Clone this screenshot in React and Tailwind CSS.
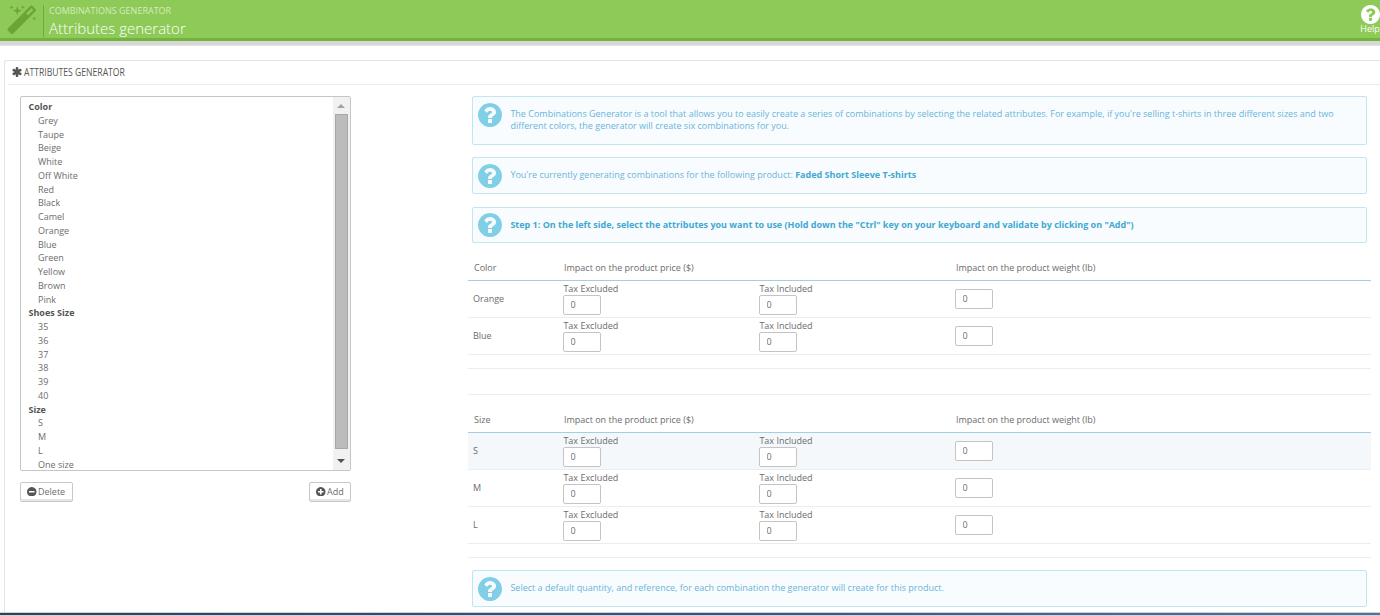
const CIRCLE =
  'M1664 896q0 209-103 385.5t-279.5 279.5-385.5 103-385.5-103-279.5-279.5-103-385.5 103-385.5 279.5-279.5 385.5-103 385.5 103 279.5 279.5 103 385.5z';

const ICONS = {
  question:
    'M1024 1376v-192q0-14-9-23t-23-9h-192q-14 0-23 9t-9 23v192q0 14 9 23t23 9h192q14 0 23-9t9-23zM1280 704q0-88-55.5-163t-138.5-116-170-41q-243 0-371 213-15 24 8 42l132 100q7 6 19 6 16 0 25-12 53-68 86-92 34-24 86-24 48 0 85.5 26t37.5 59q0 38-20 61t-68 45q-63 28-115.5 86.5t-52.5 125.5v36q0 14 9 23t23 9h192q14 0 23-9t9-23q0-19 21.5-49.5t54.5-49.5q32-18 49-28.5t46-35 44.5-48 28-60.5 12.5-81z' +
    CIRCLE,
  plus:
    'M1344 960v-128q0-26-19-45t-45-19h-256v-256q0-26-19-45t-45-19h-128q-26 0-45 19t-19 45v256h-256q-26 0-45 19t-19 45v128q0 26 19 45t45 19h256v256q0 26 19 45t45 19h128q26 0 45-19t19-45v-256h256q26 0 45-19t19-45z' +
    CIRCLE,
  minus:
    'M1344 960v-128q0-26-19-45t-45-19h-768q-26 0-45 19t-19 45v128q0 26 19 45t45 19h768q26 0 45-19t19-45z' +
    CIRCLE,
  asterisk:
    'M1546 1050q46 26 59.5 77.5t-12.5 97.5l-64 110q-26 46-77.5 59.5t-97.5-12.5l-266-153v307q0 52-38 90t-90 38h-128q-52 0-90-38t-38-90v-307l-266 153q-46 26-97.5 12.5t-77.5-59.5l-64-110q-26-46-12.5-97.5t59.5-77.5l266-154-266-154q-46-26-59.5-77.5t12.5-97.5l64-110q26-46 77.5-59.5t97.5 12.5l266 153v-307q0-52 38-90t90-38h128q52 0 90 38t38 90v307l266-153q46-26 97.5-12.5t77.5 59.5l64 110q26 46 12.5 97.5t-59.5 77.5l-266 154z',
  magic:
    'M1254 581l293-293-107-107-293 293zM1702 288q0 27-18 45l-1286 1286q-18 18-45 18t-45-18l-198-198q-18-18-18-45t18-45l1286-1286q18-18 45-18t45 18l198 198q18 18 18 45zM354 98l98 30-98 30-30 98-30-98-98-30 98-30 30-98zM704 260l196 60-196 60-60 196-60-196-196-60 196-60 60-196zM1634 738l98 30-98 30-30 98-30-98-98-30 98-30 30-98zM994 98l98 30-98 30-30 98-30-98-98-30 98-30 30-98z',
};

function Icon({ name, box = '128 128 1536 1536', className }) {
  return (
    <svg viewBox={box} fill="currentColor" className={`block shrink-0 ${className}`}>
      <path d={ICONS[name]} />
    </svg>
  );
}

const GROUPS = [
  {
    label: 'Color',
    options: ['Grey', 'Taupe', 'Beige', 'White', 'Off White', 'Red', 'Black', 'Camel', 'Orange', 'Blue', 'Green', 'Yellow', 'Brown', 'Pink'],
  },
  { label: 'Shoes Size', options: ['35', '36', '37', '38', '39', '40'] },
  { label: 'Size', options: ['S', 'M', 'L', 'One size'] },
];

function Header() {
  return (
    <header className="flex h-[41px] shrink-0 border-b-[3px] border-[#72b43b] bg-[#8dca57] pl-[7px]">
      <Icon name="magic" box="90 0 1642 1637" className="mt-[5px] h-[29px] w-[30px] text-[#6ba437]" />
      <div className="mt-[5px] ml-[6px] h-[32px] w-px bg-[#72a945]" />
      <div className="ml-[5px] flex-1 whitespace-nowrap">
        <div className="mt-[4px] h-[14px] text-[9px] leading-[14px] text-[#d3ecbf]">COMBINATIONS GENERATOR</div>
        <h1 className="h-[20px] text-[15px] leading-[20px] font-light text-white">Attributes generator</h1>
      </div>
      <div className="flex w-[20px] flex-col items-center pt-[5px] text-white">
        <Icon name="question" className="h-[19px] w-[19px]" />
        <span className="text-[9px] leading-[10px]">Help</span>
      </div>
    </header>
  );
}

function AttributeList() {
  return (
    <div className="flex h-[375px] overflow-hidden rounded-[2px] border border-[#c6c6c6] bg-white">
      <div className="flex-1 pt-[3px] pl-[7.5px] text-[#6c6c6c]">
        {GROUPS.map((group) => (
          <div key={group.label}>
            <div className="h-[13.76px] leading-[13.76px] font-bold text-[#555]">{group.label}</div>
            {group.options.map((option) => (
              <div key={option} className="h-[13.76px] pl-[9.5px] leading-[13.76px]">{option}</div>
            ))}
          </div>
        ))}
      </div>
      <div className="flex w-[17px] flex-col bg-[#f1f1f1] pl-[2px]">
        <svg viewBox="0 0 8 4" className="mt-[7px] ml-[2px] block h-[4px] w-[8px] shrink-0"><path d="M4 0L8 4H0z" fill="#a3a3a3" /></svg>
        <div className="mt-[6px] h-[335px] w-[13px] shrink-0 border border-[#a8a8a8] bg-[#bcbcbc]" />
        <svg viewBox="0 0 8 4" className="mt-[10px] ml-[2px] block h-[4px] w-[8px] shrink-0"><path d="M0 0H8L4 4z" fill="#505050" /></svg>
      </div>
    </div>
  );
}

function Button({ icon, children, className }) {
  return (
    <button className={`flex h-[20px] items-center gap-[1.5px] rounded-[2px] border border-[#c8c8c8] bg-white pb-px pl-[6px] text-[#6c6c6c] shadow-[inset_0_-2px_0_#e6e6e6] ${className}`}>
      <Icon name={icon} className="h-[9.5px] w-[9.5px] text-[#555]" />
      {children}
    </button>
  );
}

function Alert({ children, className, iconTop = 'mt-[6px]' }) {
  return (
    <div className={`mx-[4px] flex shrink-0 rounded-[2px] border border-[#c0e7f1] bg-[#f8fcff] pl-[5px] text-[#6ab4d9] ${className}`}>
      <Icon name="question" className={`h-[24px] w-[24px] text-[#81cfe6] ${iconTop}`} />
      <p className="mt-[11px] ml-[8.4px] leading-[12px] whitespace-nowrap">{children}</p>
    </div>
  );
}

function Field() {
  return (
    <input
      defaultValue="0"
      className="block h-[20px] w-[38px] rounded-[2px] border border-[#c4c4c4] bg-white px-[6.5px] pb-[2px] text-[#6c6c6c] outline-none"
    />
  );
}

const COLUMNS = 'grid grid-cols-[95px_196px_196px_1fr]';

function ImpactTable({ name, rows, highlighted }) {
  return (
    <div className="shrink-0 border-b border-[#eaedef] pb-[13px] text-[#6c6c6c]">
      <div className={`${COLUMNS} h-[38px] border-b border-[#a0d0e4]`}>
        <div className="self-end pb-[6px] pl-[6px] leading-[13px]">{name}</div>
        <div className="col-span-2 self-end pb-[6px] pl-px leading-[13px]">Impact on the product price ($)</div>
        <div className="self-end pb-[6px] pl-px leading-[13px]">Impact on the product weight (lb)</div>
      </div>
      {rows.map((row) => (
        <div key={row} className={`${COLUMNS} h-[37px] border-b border-[#eaedef] ${row === highlighted ? 'bg-[#f4f8fb]' : ''}`}>
          <div className="pt-[12px] pl-[5px] leading-[12px]">{row}</div>
          <div className="pt-[2px]"><div className="h-[12px] pl-[0.4px] leading-[12px]">Tax Excluded</div><Field /></div>
          <div className="pt-[2px]"><div className="h-[12px] pl-[0.4px] leading-[12px]">Tax Included</div><Field /></div>
          <div className="pt-[8px]"><Field /></div>
        </div>
      ))}
    </div>
  );
}

export default function App() {
  return (
    <div className="flex h-[615px] w-[1380px] flex-col overflow-hidden bg-white font-['Open_Sans',sans-serif] text-[9px] leading-[12px]">
      <Header />
      <div className="h-[5px] shrink-0 border-b border-[#e3e3e3] bg-[#d7d7d7]" />
      <div className="mt-[14px] ml-[4px] flex h-[552px] shrink-0 flex-col rounded-tl-[3px] border-t border-l border-[#e2e4e6]">
        <div className="ml-[3px] flex h-[24px] shrink-0 items-center border-b border-[#e9ebed] pb-px pl-[4px] text-[#555]">
          <Icon name="asterisk" className="h-[10px] w-[10px]" />
          <h2 className="ml-[1.5px] origin-left scale-x-[0.77] text-[11.2px] leading-[14px] font-normal whitespace-nowrap">ATTRIBUTES GENERATOR</h2>
        </div>
        <div className="flex flex-1 pt-[11px] pl-[15px]">
          <div className="w-[331px] shrink-0">
            <AttributeList />
            <div className="mt-[11px] flex justify-between">
              <Button icon="minus" className="w-[53px]">Delete</Button>
              <Button icon="plus" className="w-[42px]">Add</Button>
            </div>
          </div>
          <div className="ml-[117px] flex w-[903px] shrink-0 flex-col">
            <Alert className="h-[49px]">
              The Combinations Generator is a tool that allows you to easily create a series of combinations by selecting the related attributes. For example, if you're selling t-shirts in three different sizes and two
              <br />
              different colors, the generator will create six combinations for you.
            </Alert>
            <Alert className="mt-[12px] h-[37px]">
              You're currently generating combinations for the following product: <b className="text-[#42a8d0]">Faded Short Sleeve T-shirts</b>
            </Alert>
            <Alert className="mt-[13px] h-[36px]" iconTop="mt-[5px]">
              <b className="text-[#42a8d0]">Step 1: On the left side, select the attributes you want to use (Hold down the "Ctrl" key on your keyboard and validate by clicking on "Add")</b>
            </Alert>
            <ImpactTable name="Color" rows={['Orange', 'Blue']} />
            <div className="h-[26px] shrink-0 border-b border-[#eaedef]" />
            <ImpactTable name="Size" rows={['S', 'M', 'L']} highlighted="S" />
            <Alert className="mt-[12px] h-[37px]">
              Select a default quantity, and reference, for each combination the generator will create for this product.
            </Alert>
          </div>
        </div>
      </div>
      <div className="h-[3px] shrink-0 border-t border-[#d0d0d0] bg-linear-to-r from-[#1b4a63] via-[#1f5c8c] to-[#3c7ba6]" />
    </div>
  );
}
